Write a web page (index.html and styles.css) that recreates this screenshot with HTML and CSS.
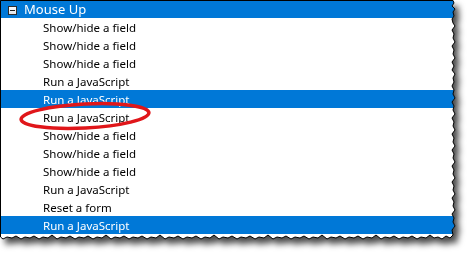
FILE: index.html
```html
<!DOCTYPE html>
<html>
<head>
<meta charset="utf-8">
<link rel="stylesheet" href="styles.css">
</head>
<body>
<div class="frame">
  <div class="sheet">
    <ul class="tree">
      <li class="row head sel"><span class="toggle"></span>Mouse Up</li>
      <li class="row item">Show/hide a field</li>
      <li class="row item">Show/hide a field</li>
      <li class="row item">Show/hide a field</li>
      <li class="row item">Run a JavaScript</li>
      <li class="row item sel">Run a JavaScript</li>
      <li class="row item">Run a JavaScript</li>
      <li class="row item">Show/hide a field</li>
      <li class="row item">Show/hide a field</li>
      <li class="row item">Show/hide a field</li>
      <li class="row item">Run a JavaScript</li>
      <li class="row item">Reset a form</li>
      <li class="row item sel">Run a JavaScript</li>
    </ul>
  </div>
  <svg class="edge" width="474" height="257" viewBox="0 0 474 257">
    <path d="M0.5,237 L0.5,0.5 L453,0.5 L454,3 L452,6 L455,9 L453,12 L454,16 L452,19 L453,23 L455,26 L452,30 L454,34 L453,38 L455,42 L452,46 L454,50 L453,54 L455,58 L452,62 L454,66 L452,70 L455,74 L453,78 L454,82 L452,86 L454,90 L453,94 L455,98 L452,102 L454,106 L453,110 L455,114 L452,118 L454,122 L453,126 L455,130 L452,134 L454,138 L453,142 L455,146 L452,150 L454,154 L453,158 L455,162 L452,166 L454,170 L453,174 L455,178 L452,182 L454,186 L453,190 L455,194 L452,198 L454,202 L453,206 L455,210 L452,214 L454,218 L453,222 L455,226 L452,230 L453,235 L450,238 L446,236 L442,239 L438,237 L434,238 L430,235 L426,238 L421,237 L417,239 L412,236 L408,238 L403,237 L399,239 L394,236 L390,238 L385,237 L381,239 L376,235 L372,238 L367,237 L363,239 L358,236 L354,238 L349,237 L345,239 L340,236 L336,238 L331,237 L327,239 L322,235 L318,238 L313,237 L309,239 L304,236 L300,238 L295,237 L291,239 L286,236 L282,238 L277,237 L273,239 L268,235 L264,238 L259,237 L255,239 L250,236 L246,238 L241,237 L237,239 L232,236 L228,238 L223,237 L219,239 L214,235 L210,238 L205,237 L201,239 L196,236 L192,238 L187,237 L183,239 L178,236 L174,238 L169,237 L165,239 L160,235 L156,238 L151,237 L147,239 L142,236 L138,238 L133,237 L129,239 L124,236 L120,238 L115,237 L111,239 L106,235 L102,238 L97,237 L93,239 L88,236 L84,238 L79,237 L75,239 L70,236 L66,238 L61,237 L57,239 L52,235 L48,238 L43,237 L39,239 L34,236 L30,238 L25,237 L21,239 L16,236 L12,238 L7,237 L3,239 L0.5,237" fill="none" stroke="#000" stroke-width="1"/>
  </svg>
  <svg class="mark" width="474" height="257" viewBox="0 0 474 257">
    <ellipse cx="85" cy="116" rx="64" ry="12" transform="rotate(-3 85 116)" fill="none" stroke="#e0161a" stroke-width="3.5"/>
  </svg>
</div>
</body>
</html>
```

FILE: styles.css
```css
html, body {
  margin: 0;
  padding: 0;
  background: #fff;
}

.frame {
  position: relative;
  width: 474px;
  height: 257px;
  overflow: hidden;
}

.sheet {
  width: 462px;
  height: 244px;
  filter: drop-shadow(5px 6px 3px rgba(0, 0, 0, 0.7));
}

.tree {
  list-style: none;
  margin: 0;
  padding: 0;
  height: 242px;
  background: #fff;
  clip-path: polygon(0 0, 453px 0, 454px 3px, 452px 6px, 455px 9px, 453px 12px, 454px 16px, 452px 19px, 453px 23px, 455px 26px, 452px 30px, 454px 34px, 453px 38px, 455px 42px, 452px 46px, 454px 50px, 453px 54px, 455px 58px, 452px 62px, 454px 66px, 452px 70px, 455px 74px, 453px 78px, 454px 82px, 452px 86px, 454px 90px, 453px 94px, 455px 98px, 452px 102px, 454px 106px, 453px 110px, 455px 114px, 452px 118px, 454px 122px, 453px 126px, 455px 130px, 452px 134px, 454px 138px, 453px 142px, 455px 146px, 452px 150px, 454px 154px, 453px 158px, 455px 162px, 452px 166px, 454px 170px, 453px 174px, 455px 178px, 452px 182px, 454px 186px, 453px 190px, 455px 194px, 452px 198px, 454px 202px, 453px 206px, 455px 210px, 452px 214px, 454px 218px, 453px 222px, 455px 226px, 452px 230px, 453px 235px, 450px 238px, 446px 236px, 442px 239px, 438px 237px, 434px 238px, 430px 235px, 426px 238px, 421px 237px, 417px 239px, 412px 236px, 408px 238px, 403px 237px, 399px 239px, 394px 236px, 390px 238px, 385px 237px, 381px 239px, 376px 235px, 372px 238px, 367px 237px, 363px 239px, 358px 236px, 354px 238px, 349px 237px, 345px 239px, 340px 236px, 336px 238px, 331px 237px, 327px 239px, 322px 235px, 318px 238px, 313px 237px, 309px 239px, 304px 236px, 300px 238px, 295px 237px, 291px 239px, 286px 236px, 282px 238px, 277px 237px, 273px 239px, 268px 235px, 264px 238px, 259px 237px, 255px 239px, 250px 236px, 246px 238px, 241px 237px, 237px 239px, 232px 236px, 228px 238px, 223px 237px, 219px 239px, 214px 235px, 210px 238px, 205px 237px, 201px 239px, 196px 236px, 192px 238px, 187px 237px, 183px 239px, 178px 236px, 174px 238px, 169px 237px, 165px 239px, 160px 235px, 156px 238px, 151px 237px, 147px 239px, 142px 236px, 138px 238px, 133px 237px, 129px 239px, 124px 236px, 120px 238px, 115px 237px, 111px 239px, 106px 235px, 102px 238px, 97px 237px, 93px 239px, 88px 236px, 84px 238px, 79px 237px, 75px 239px, 70px 236px, 66px 238px, 61px 237px, 57px 239px, 52px 235px, 48px 238px, 43px 237px, 39px 239px, 34px 236px, 30px 238px, 25px 237px, 21px 239px, 16px 236px, 12px 238px, 7px 237px, 3px 239px, 0 237px);
}

.row {
  height: 18px;
  display: flex;
  align-items: center;
  font-family: "Noto Sans", "DejaVu Sans", sans-serif;
  font-size: 11.5px;
  color: #000;
  white-space: nowrap;
}

.item {
  padding-left: 43px;
}

.head {
  padding-left: 8px;
  font-size: 13px;
}

.sel {
  background: #0078d7;
  color: #fff;
}

.toggle {
  position: relative;
  width: 9px;
  height: 9px;
  box-sizing: border-box;
  border: 1px solid #2b2b2b;
  background: linear-gradient(#fbfbfb, #dfe4ea);
  margin-right: 7px;
  margin-top: 3px;
}

.toggle::after {
  content: "";
  position: absolute;
  left: 1px;
  top: 3px;
  width: 5px;
  height: 1px;
  background: #1e1e1e;
}

.edge,
.mark {
  position: absolute;
  left: 0;
  top: 0;
}
```
